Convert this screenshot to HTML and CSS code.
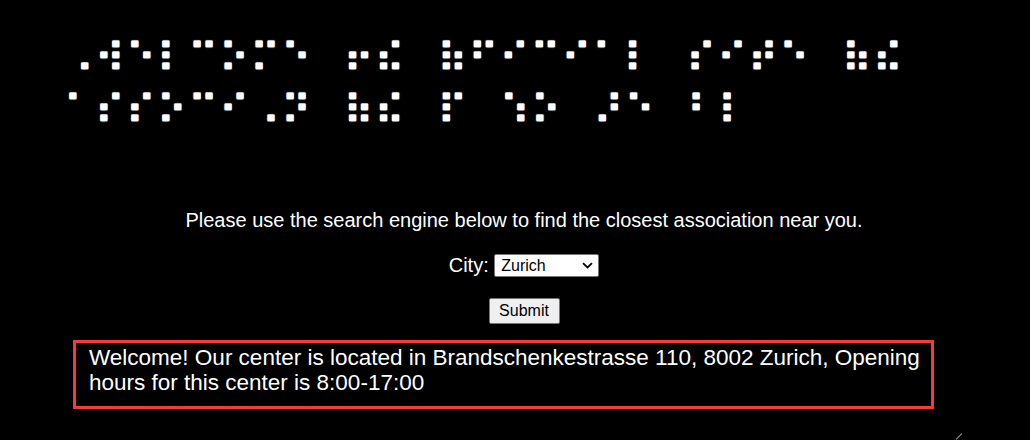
FILE: index.html
```html
<!DOCTYPE html>
<html lang="en">
<head>
<meta charset="utf-8">
<title>Association</title>
<link rel="stylesheet" href="styles.css">
</head>
<body>
<div class="page">
  <h1 class="braille">⠠⠺⠑⠇⠉⠕⠍⠑ ⠖⠮ ⠷⠋⠊⠉⠊⠁⠇ ⠎⠊⠞⠑ ⠷⠮ ⠁⠎⠎⠕⠉⠊⠠⠝ ⠷⠮ ⠏ ⠱⠕ ⠜⠑ ⠃⠇</h1>
  <div class="center">
    <p class="intro">Please use the search engine below to find the closest association near you.</p>
    <form class="search">
      <div class="row">
        <label for="city">City:</label>
        <span class="select-wrap">
          <select id="city" class="city">
            <option>Zurich</option>
            <option>Bern</option>
            <option>Geneva</option>
          </select>
          <svg class="chevron" width="11" height="7" viewBox="0 0 11 7" aria-hidden="true"><path d="M1 1.2 L5.5 5.5 L10 1.2" fill="none" stroke="#000" stroke-width="1.8"/></svg>
        </span>
      </div>
      <button type="button" class="submit">Submit</button>
    </form>
  </div>
  <div class="result">Welcome! Our center is located in Brandschenkestrasse 110, 8002 Zurich, Opening hours for this center is 8:00-17:00</div>
</div>
<span class="grip"></span>
</body>
</html>
```
FILE: styles.css
```css
html, body {
  margin: 0;
  background: #000;
  color: #fff;
  font-family: "Liberation Sans", Arial, sans-serif;
}
.page {
  padding-left: 64px;
  width: 920px;
}
.braille {
  margin: 0 0 73px;
  padding-top: 32px;
  font-family: "DejaVu Sans", sans-serif;
  font-weight: normal;
  font-size: 40px;
  line-height: 52px;
  letter-spacing: 1.74px;
  word-spacing: 17.08px;
  -webkit-text-stroke: 1px #fff;
  text-shadow: 0 0 1.5px #fff, 0 0 1.5px #fff, 0 0 1px #fff;
}
.center {
  text-align: center;
}
.intro {
  font-size: 20px;
  margin: 0 0 22px;
}
.row {
  font-size: 20px;
  display: flex;
  justify-content: center;
  align-items: center;
  gap: 5.6px;
}
.select-wrap {
  position: relative;
  display: inline-flex;
}
.city {
  appearance: none;
  -webkit-appearance: none;
  box-sizing: border-box;
  width: 105px;
  height: 23px;
  margin: 0;
  padding: 0 0 0 6px;
  border: 1px solid #767676;
  border-radius: 2px;
  background: #fff;
  color: #000;
  font-family: "Liberation Sans", Arial, sans-serif;
  font-size: 16px;
}
.chevron {
  position: absolute;
  right: 6px;
  top: 8px;
  pointer-events: none;
}
.submit {
  margin-top: 21px;
  font-family: "Liberation Sans", Arial, sans-serif;
  font-size: 16px;
  height: 26px;
  width: 71px;
  background: #efefef;
  color: #000;
  border: 1px solid #767676;
  border-radius: 2px;
}
.result {
  box-sizing: border-box;
  margin: 16px 0 0 9px;
  width: 861px;
  border: 3px solid #f03c3c;
  padding: 2px 4px 11px 13px;
  font-size: 22.5px;
  line-height: 25px;
}
.grip {
  position: absolute;
  left: 955px;
  top: 436px;
  width: 8px;
  height: 1px;
  background: #9a9a9a;
  transform: rotate(-45deg);
}
```
